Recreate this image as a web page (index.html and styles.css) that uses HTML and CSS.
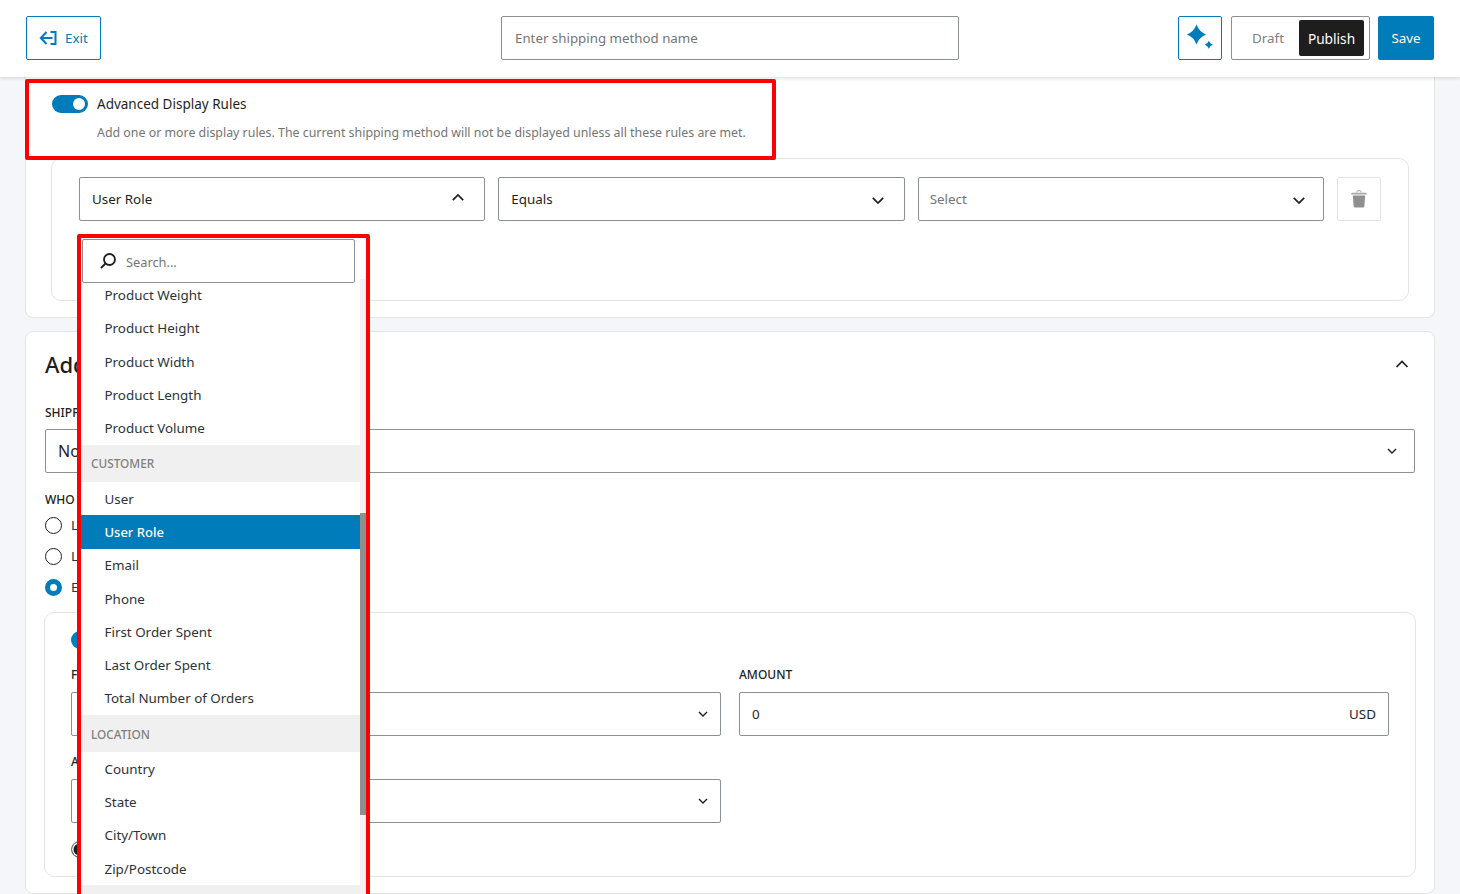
FILE: index.html
```html
<!DOCTYPE html>
<html lang="en">
<head>
    <meta charset="UTF-8">
    <title>Shipping method</title>
    <link rel="stylesheet" href="styles.css">
</head>
<body>
    <header class="header">
        <div class="header-left">
            <button class="exit-btn">
                <svg width="18" height="16" viewBox="0 0 18 16" fill="none" stroke="currentColor" stroke-width="2">
                    <path d="M11.500 2H16.500V14H11.500"></path>
                    <path d="M7.500 2L1.800 8l5.700 6M2 8h11.500"></path>
                </svg>
                <span>Exit</span>
            </button>
        </div>
        <input class="name-input" type="text" placeholder="Enter shipping method name">
        <div class="header-right">
            <button class="spark-btn">
                <svg width="28" height="28" viewBox="0 0 28 28" fill="#007cba">
                    <path d="M10.500 .5Q13 7.500 20 10.500 13 13.500 10.500 20.500 8 13.500 1 10.500 8 7.500 10.500 .5z"></path>
                    <path d="M22.800 16.800Q23.800 19.800 26.800 20.800 23.800 21.800 22.800 24.800 21.800 21.800 18.800 20.800 21.800 19.800 22.800 16.800z"></path>
                </svg>
            </button>
            <div class="status-switch">
                <span class="status-draft">Draft</span>
                <span class="status-publish">Publish</span>
            </div>
            <button class="save-btn">Save</button>
        </div>
    </header>

    <main class="main-content">
        <section class="card card-rules">
            <div class="toggle-row">
                <span class="toggle"></span>
                <span class="toggle-label">Advanced Display Rules</span>
            </div>
            <p class="rules-desc">Add one or more display rules. The current shipping method will not be displayed unless all these rules are met.</p>
            <div class="rule-box">
                <div class="rule-row">
                    <div class="rule-field">
                        <div class="select rule-select">
                            <span>User Role</span>
                            <svg class="chev-up" width="12" height="7" viewBox="0 0 12 7" fill="none" stroke="#1e1e1e" stroke-width="1.700"><path d="M.8 6.200L6 1l5.200 5.200"></path></svg>
                        </div>
                        <div class="dropdown">
                            <div class="dropdown-search">
                                <svg width="18" height="18" viewBox="0 0 18 18" fill="none" stroke="#1e1e1e" stroke-width="1.800"><circle cx="10.500" cy="7.500" r="5.500"></circle><path d="M6.500 11.500L2 16"></path></svg>
                                <span class="search-text">Search...</span>
                            </div>
                            <div class="dropdown-body">
                                <ul class="dropdown-list">
                                    <li>Product Weight</li>
                                    <li>Product Height</li>
                                    <li>Product Width</li>
                                    <li>Product Length</li>
                                    <li>Product Volume</li>
                                    <li class="group">CUSTOMER</li>
                                    <li>User</li>
                                    <li class="selected">User Role</li>
                                    <li>Email</li>
                                    <li>Phone</li>
                                    <li>First Order Spent</li>
                                    <li>Last Order Spent</li>
                                    <li>Total Number of Orders</li>
                                    <li class="group">LOCATION</li>
                                    <li>Country</li>
                                    <li>State</li>
                                    <li>City/Town</li>
                                    <li>Zip/Postcode</li>
                                    <li class="group"></li>
                                </ul>
                                <div class="scrollbar"><div class="scroll-thumb"></div></div>
                            </div>
                        </div>
                    </div>
                    <div class="rule-field">
                        <div class="select rule-select">
                            <span>Equals</span>
                            <svg class="chev-down" width="12" height="7" viewBox="0 0 12 7" fill="none" stroke="#1e1e1e" stroke-width="1.700"><path d="M.8 .8L6 6l5.200-5.200"></path></svg>
                        </div>
                    </div>
                    <div class="rule-field">
                        <div class="select rule-select is-empty">
                            <span>Select</span>
                            <svg class="chev-down" width="12" height="7" viewBox="0 0 12 7" fill="none" stroke="#1e1e1e" stroke-width="1.700"><path d="M.8 .8L6 6l5.200-5.200"></path></svg>
                        </div>
                    </div>
                    <button class="trash-btn">
                        <svg width="16" height="18" viewBox="0 0 16 18">
                            <path d="M6 2.500V1.500C6 1 6.400.7 6.900.7h2.200c.5 0 .9.300.9.800V2.500" fill="none" stroke="#a0a0a0" stroke-width="1"></path>
                            <path d="M1 2.700h14c.4 0 .7.300.7.700V4.600H.3V3.400c0-.4.300-.7.700-.7z" fill="#a8a8a8"></path>
                            <path d="M1.800 5.400h12.400L13.300 16.500c-.1.700-.5 1.100-1.200 1.100H3.900c-.7 0-1.100-.4-1.200-1.100z" fill="#8f8f8f"></path>
                        </svg>
                    </button>
                </div>
            </div>
        </section>

        <section class="card card-settings">
            <div class="settings-head">
                <h2>Add</h2>
                <svg width="14" height="8" viewBox="0 0 14 8" fill="none" stroke="#1e1e1e" stroke-width="1.700"><path d="M1.500 7L7 1.500 12.500 7"></path></svg>
            </div>
            <div class="field-label">SHIPPING</div>
            <div class="select select-big">
                <span>None</span>
                <svg width="10" height="6" viewBox="0 0 10 6" fill="none" stroke="#1e1e1e" stroke-width="1.400"><path d="M1 1l4 4 4-4"></path></svg>
            </div>
            <div class="field-label who-label">WHO</div>
            <div class="radio-list">
                <div class="radio-row"><span class="radio"></span><span>Log</span></div>
                <div class="radio-row"><span class="radio"></span><span>Log</span></div>
                <div class="radio-row"><span class="radio checked"></span><span>Eve</span></div>
            </div>
            <div class="inner-panel">
                <span class="toggle"></span>
                <div class="panel-grid">
                    <div>
                        <div class="field-label">FREE</div>
                        <div class="select">
                            <span></span>
                            <svg width="10" height="6" viewBox="0 0 10 6" fill="none" stroke="#1e1e1e" stroke-width="1.400"><path d="M1 1l4 4 4-4"></path></svg>
                        </div>
                    </div>
                    <div>
                        <div class="field-label">AMOUNT</div>
                        <div class="select amount-input">
                            <span>0</span>
                            <span>USD</span>
                        </div>
                    </div>
                    <div>
                        <div class="field-label">APPLY</div>
                        <div class="select">
                            <span></span>
                            <svg width="10" height="6" viewBox="0 0 10 6" fill="none" stroke="#1e1e1e" stroke-width="1.400"><path d="M1 1l4 4 4-4"></path></svg>
                        </div>
                    </div>
                </div>
                <span class="radio radio-dark"></span>
            </div>
        </section>
    </main>

    <div class="mark mark-rules"></div>
    <div class="mark mark-dropdown"></div>
</body>
</html>
```

FILE: styles.css
```css
* {
    margin: 0;
    padding: 0;
    box-sizing: border-box;
}

html, body {
    height: 894px;
    overflow: hidden;
}

body {
    position: relative;
    font-family: "Noto Sans", "Open Sans", sans-serif;
    font-size: 13.400px;
    color: #2c3338;
    background: #f4f6f9;
}

button {
    font-family: inherit;
    background: none;
    cursor: pointer;
}

.header {
    position: relative;
    z-index: 5;
    height: 77px;
    padding: 16px 26px 17px;
    background: white;
    box-shadow: 0 1px 4px rgba(0,0,0,0.15);
    display: grid;
    grid-template-columns: 1fr 458px 1fr;
    align-items: center;
}

.header-left {
    display: flex;
}

.exit-btn {
    width: 75px;
    height: 44px;
    border: 1px solid #007cba;
    border-radius: 2px;
    color: #007cba;
    font-size: 13.400px;
    display: flex;
    align-items: center;
    justify-content: center;
    gap: 8px;
}

.name-input {
    height: 44px;
    padding: 0 13px;
    border: 1px solid #8c8f94;
    border-radius: 2px;
    font-family: inherit;
    font-size: 13.300px;
}

.name-input::placeholder {
    color: #757575;
    opacity: 1;
}

.header-right {
    display: flex;
    justify-content: flex-end;
    align-items: center;
}

.spark-btn {
    width: 44px;
    height: 44px;
    border: 1px solid #007cba;
    border-radius: 2px;
    display: flex;
    align-items: center;
    justify-content: center;
    margin-right: 9px;
}

.status-switch {
    width: 139px;
    height: 44px;
    border: 1px solid #8c8f94;
    border-radius: 2px;
    padding: 3px 5px 3px 0;
    display: flex;
    justify-content: flex-end;
    align-items: stretch;
    margin-right: 8px;
}

.status-draft {
    color: #808080;
    flex: 1;
    display: flex;
    align-items: center;
    justify-content: center;
    padding-left: 5px;
}

.status-publish {
    width: 65px;
    background: #1e1e1e;
    color: white;
    border-radius: 2px;
    font-size: 13.700px;
    display: flex;
    align-items: center;
    justify-content: center;
}

.save-btn {
    width: 56px;
    height: 44px;
    border: none;
    border-radius: 2px;
    background: #007cba;
    color: white;
    font-size: 13.400px;
}

.main-content {
    padding: 0 25px 0 25px;
}

.card {
    background: white;
    border: 1px solid #e2e4e7;
}

.card-rules {
    height: 241px;
    border-top: none;
    border-radius: 0 0 8px 8px;
    padding-top: 18px;
}

.toggle-row {
    display: flex;
    align-items: center;
    gap: 9px;
    padding-left: 26px;
}

.toggle {
    display: block;
    position: relative;
    width: 36px;
    height: 18px;
    border-radius: 9px;
    background: #007cba;
}

.toggle::after {
    content: "";
    position: absolute;
    top: 3px;
    right: 3px;
    width: 12px;
    height: 12px;
    border-radius: 50%;
    background: white;
}

.toggle-label {
    color: #1e1e1e;
    font-size: 13.500px;
    line-height: 18px;
}

.rules-desc {
    margin-top: 11px;
    padding-left: 71px;
    font-size: 12.390px;
    line-height: 18px;
    color: #757575;
}

.rule-box {
    height: 143px;
    margin: 16px 25px 0 25px;
    padding: 18px 27px;
    border: 1px solid #e2e4e7;
    border-radius: 10px;
}

.rule-row {
    display: flex;
    gap: 13px;
}

.rule-field {
    position: relative;
    flex: 1;
}

.select {
    height: 44px;
    padding: 0 12px;
    border: 1px solid #8c8f94;
    border-radius: 2px;
    background: white;
    color: #1e1e1e;
    display: flex;
    align-items: center;
    justify-content: space-between;
}

.rule-select {
    padding-right: 20px;
}

.chev-up {
    margin-top: -3px;
}

.chev-down {
    margin-top: 2px;
}

.is-empty {
    padding-left: 11px;
    padding-right: 18px;
}

.is-empty span {
    color: #757575;
}

.trash-btn {
    width: 44px;
    height: 44px;
    border: 1px solid #e2e4e7;
    border-radius: 2px;
    display: flex;
    align-items: center;
    justify-content: center;
}

.dropdown {
    position: absolute;
    z-index: 4;
    top: 61px;
    left: 1px;
    width: 286px;
    height: 660px;
    background: white;
}

.dropdown-search {
    position: relative;
    z-index: 1;
    width: 273px;
    height: 44px;
    margin: 1px 0 -4.500px 2px;
    padding-left: 16px;
    border: 1px solid #8c8f94;
    border-radius: 2px;
    background: white;
    color: #757575;
    font-size: 12.800px;
    display: flex;
    align-items: center;
    gap: 9px;
}

.search-text {
    margin-top: 2px;
}

.dropdown-body {
    display: flex;
}

.dropdown-list {
    width: 280px;
    list-style: none;
    color: #2c3338;
}

.dropdown-list li {
    height: 33.300px;
    padding-left: 24.500px;
    display: flex;
    align-items: center;
}

.dropdown-list .group {
    height: 37px;
    padding-left: 11px;
    background: #f0f0f0;
    color: #808080;
    font-size: 11.800px;
    font-weight: 500;
}

.dropdown-list .selected {
    background: #007cba;
    color: white;
    font-size: 13px;
    font-weight: 500;
}

.scrollbar {
    width: 6px;
    background: #f1f1f1;
}

.scroll-thumb {
    height: 302px;
    margin-top: 234px;
    background: #8f8f8f;
}

.card-settings {
    height: 563px;
    margin-top: 13px;
    padding: 17px 19px 0 19px;
    border-radius: 8px;
}

.settings-head {
    height: 30px;
    padding-right: 6px;
    display: flex;
    align-items: center;
    justify-content: space-between;
}

.settings-head h2 {
    font-size: 22px;
    font-weight: 500;
    color: #1e1e1e;
}

.field-label {
    height: 16px;
    margin-bottom: 9px;
    font-size: 12px;
    font-weight: 500;
    line-height: 16px;
    color: #1e1e1e;
}

.card-settings > .field-label {
    margin-top: 26px;
    margin-bottom: 8px;
}

.card-settings > .who-label {
    margin-top: 19px;
    margin-bottom: 1.500px;
}

.select-big {
    font-size: 16px;
    padding-right: 17px;
}

.radio-row {
    height: 31px;
    display: flex;
    align-items: center;
    gap: 9px;
}

.radio {
    display: block;
    width: 17px;
    height: 17px;
    border: 1.500px solid #1e1e1e;
    border-radius: 50%;
    background: white;
}

.radio.checked {
    border: 5px solid #007cba;
}

.inner-panel {
    height: 265px;
    margin: 9.500px -1px 0 -1px;
    padding: 18px 26px 0;
    border: 1px solid #e2e4e7;
    border-radius: 10px;
}

.panel-grid {
    margin-top: 18px;
    display: grid;
    grid-template-columns: 1fr 1fr;
    gap: 18px;
}

.amount-input {
    padding: 0 12px;
}

.radio-dark {
    margin-top: 18px;
    border: 1px solid #777;
    background: #1e1e1e;
    box-shadow: inset 0 0 0 1.500px white;
}

.mark {
    position: absolute;
    z-index: 6;
    border: 4px solid #ff0000;
    border-radius: 2px;
    pointer-events: none;
}

.mark-rules {
    left: 25px;
    top: 79px;
    width: 751px;
    height: 81px;
}

.mark-dropdown {
    left: 77px;
    top: 234px;
    width: 293px;
    height: 680px;
}
```
